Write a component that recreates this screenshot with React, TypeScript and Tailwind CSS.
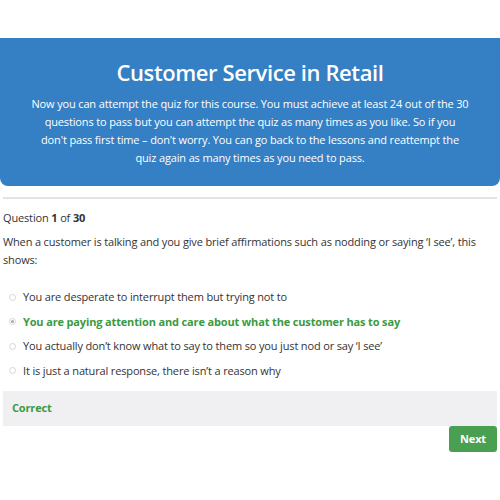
const options = [
  { text: "You are desperate to interrupt them but trying not to", correct: false },
  { text: "You are paying attention and care about what the customer has to say", correct: true },
  { text: "You actually don\u2019t know what to say to them so you just nod or say \u2018I see\u2019", correct: false },
  { text: "It is just a natural response, there isn\u2019t a reason why", correct: false },
];

function Radio({ checked }: { checked: boolean }) {
  return (
    <span className="flex h-[7px] w-[7px] shrink-0 items-center justify-center rounded-full border border-[#d6d6d6] bg-white">
      {checked && <span className="h-[3px] w-[3px] rounded-full bg-[#a8a8a8]" />}
    </span>
  );
}

export default function App() {
  return (
    <div
      className="min-h-[500px] w-[500px] bg-white text-[#333] text-[11px] tracking-[-0.15px]"
      style={{ fontFamily: '"Open Sans", "Noto Sans", sans-serif' }}
    >
      <div className="h-[38px]" />
      <div className="rounded-b-[8px] bg-[#3580c4] px-4 pb-[19px] pt-[18px] text-center text-white">
        <h1 className="text-[22px] font-semibold leading-[32px] tracking-[-0.4px]">
          Customer Service in Retail
        </h1>
        <p className="mt-[7px] leading-[18px]">
          Now you can attempt the quiz for this course. You must achieve at least 24 out of the 30
          <br />
          questions to pass but you can attempt the quiz as many times as you like. So if you
          <br />
          don't pass first time – don't worry. You can go back to the lessons and reattempt the
          <br />
          quiz again as many times as you need to pass.
        </p>
      </div>

      <div className="px-[3px]">
        <div className="mt-[11px] h-[2px] bg-[#e4e4e4]" />
        <p className="mt-[10px] leading-[18px]">
          Question <span className="font-bold">1</span> of <span className="font-bold">30</span>
        </p>
        <p className="mt-[6px] leading-[18px]">
          When a customer is talking and you give brief affirmations such as nodding or saying ‘I see’, this
          <br />
          shows:
        </p>

        <ul className="mt-[16px] flex flex-col">
          {options.map((o) => (
            <li key={o.text} className="flex h-[24.5px] items-center gap-[7px] pl-[6px]">
              <Radio checked={o.correct} />
              <span className={o.correct ? "font-bold text-[#3a9a41]" : "text-[#333]"}>{o.text}</span>
            </li>
          ))}
        </ul>

        <div className="mt-[8px] flex h-[35px] items-center bg-[#f0f0f2] px-[9px]">
          <span className="font-bold text-[#3a9a41]">Correct</span>
        </div>
        <div className="flex justify-end">
          <button className="h-[26px] w-[48px] rounded-[3px] bg-[#48a050] font-bold text-white">
            Next
          </button>
        </div>
      </div>
    </div>
  );
}
